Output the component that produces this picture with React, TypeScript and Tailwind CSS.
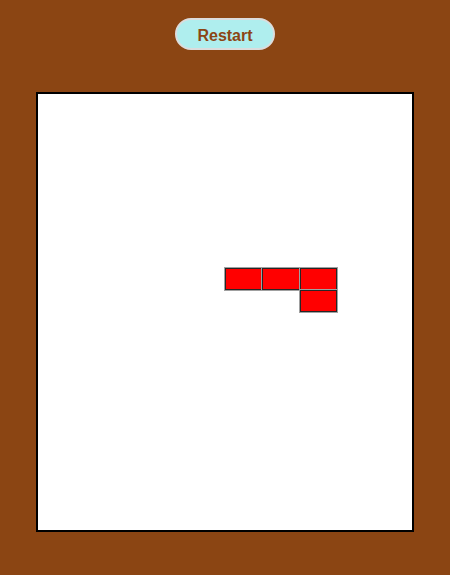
import React from "react";

const cells: [number, number][] = [
  [5, 8],
  [6, 8],
  [7, 8],
  [7, 9],
];

export default function App() {
  return (
    <div className="w-[450px] h-[575px] bg-[#8B4513] flex flex-col items-center pt-[18px]" style={{ fontFamily: '"Liberation Sans", Arial, sans-serif' }}>
      <button className="w-[100px] h-[32px] rounded-full bg-[#afeeee] border-2 border-[#dcdcdc] text-[#8B4513] font-bold text-[16px] leading-none pt-[3px]">
        Restart
      </button>
      <div className="mt-[42px] w-[378px] h-[440px] border-2 border-black bg-white">
        <div className="w-full h-full grid grid-cols-10 grid-rows-20">
          {cells.map(([c, r], i) => (
            <div
              key={i}
              className="bg-[#ff0000] border border-[#262626] shadow-[0_0_0_1px_#a0a0a0] relative"
              style={{ gridColumnStart: c + 1, gridRowStart: r + 1 }}
            />
          ))}
        </div>
      </div>
    </div>
  );
}
